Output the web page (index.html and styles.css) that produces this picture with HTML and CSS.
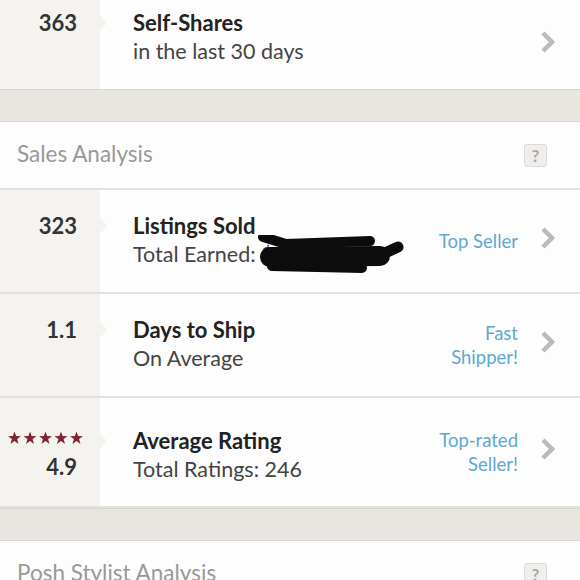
FILE: index.html
```html
<!DOCTYPE html>
<html lang="en">
<head>
  <meta charset="UTF-8" />
  <title>Closet Stats</title>
  <link rel="stylesheet" href="styles.css">
</head>
<body>

<div class="row row-top">
  <div class="stat"><div class="stat-num">363</div></div>
  <div class="info">
    <div class="title">Self-Shares</div>
    <div class="sub">in the last 30 days</div>
  </div>
  <div class="tail">
    <svg class="chev" width="14" height="22" viewBox="0 0 14 22"><path d="M2 2 L11 11 L2 20" /></svg>
  </div>
</div>

<div class="band"></div>

<div class="section-head">
  <span>Sales Analysis</span>
  <span class="help">?</span>
</div>

<div class="row">
  <div class="stat"><div class="stat-num">323</div></div>
  <div class="info">
    <div class="title">Listings Sold</div>
    <div class="sub">Total Earned: $</div>
  </div>
  <div class="tail">
    <div class="badge">Top Seller</div>
    <svg class="chev" width="14" height="22" viewBox="0 0 14 22"><path d="M2 2 L11 11 L2 20" /></svg>
  </div>
  <!-- scribbled out by hand in the screenshot -->
  <svg class="scribble" width="150" height="40" viewBox="0 0 150 40">
    <path d="M5 2 L28 9 L112 6" stroke-width="10" />
    <path d="M12 22 L122 21" stroke-width="20" />
    <path d="M112 25 L140 12" stroke-width="11" />
    <path d="M14 31 L104 33" stroke-width="10" />
  </svg>
</div>

<div class="row">
  <div class="stat"><div class="stat-num">1.1</div></div>
  <div class="info">
    <div class="title">Days to Ship</div>
    <div class="sub">On Average</div>
  </div>
  <div class="tail">
    <div class="badge">Fast<br>Shipper!</div>
    <svg class="chev" width="14" height="22" viewBox="0 0 14 22"><path d="M2 2 L11 11 L2 20" /></svg>
  </div>
</div>

<div class="row row-rating">
  <div class="stat">
    <svg class="stars" width="76" height="14" viewBox="0 0 76 14">
      <defs>
        <polygon id="star" points="6.5,0 8.1,4.6 13,4.7 9.1,7.6 10.5,12.4 6.5,9.5 2.5,12.4 3.9,7.6 0,4.7 4.9,4.6" />
      </defs>
      <use href="#star" x="0" y="0.5" />
      <use href="#star" x="15.5" y="0.5" />
      <use href="#star" x="31" y="0.5" />
      <use href="#star" x="46.5" y="0.5" />
      <use href="#star" x="62" y="0.5" />
    </svg>
    <div class="stat-num">4.9</div>
  </div>
  <div class="info">
    <div class="title">Average Rating</div>
    <div class="sub">Total Ratings: 246</div>
  </div>
  <div class="tail">
    <div class="badge">Top-rated<br>Seller!</div>
    <svg class="chev" width="14" height="22" viewBox="0 0 14 22"><path d="M2 2 L11 11 L2 20" /></svg>
  </div>
</div>

<div class="band"></div>

<div class="section-head">
  <span>Posh Stylist Analysis</span>
  <span class="help">?</span>
</div>

</body>
</html>
```

FILE: styles.css
```css
body { margin: 0; background: #fdfdfd; font-family: 'Lato', 'Open Sans', sans-serif; color: #222; overflow: hidden; }

.row { position: relative; display: flex; background: #fdfdfd; border-bottom: 2px solid #e3e1de; }
.row-top { border-bottom: none; }
.stat { width: 100px; box-sizing: border-box; padding: 22px 23px 0 0; background: #f4f3f0; text-align: right; }
.stat-num { font-size: 22px; line-height: 28px; font-weight: 700; color: #333; }
.stars { display: block; margin: 8px 0 8px 8px; fill: #7e2634; }
.info { flex: 1; padding: 22px 0 24px 33px; }
.title { position: relative; font-size: 22px; line-height: 28px; font-weight: 700; color: #222; }
.title::before { content: ""; position: absolute; left: -33px; top: 6px; border-left: 7px solid #f4f3f0; border-top: 8px solid transparent; border-bottom: 8px solid transparent; }
.sub { font-size: 21.5px; line-height: 28px; color: #444; }
.tail { display: flex; align-items: center; padding-right: 25px; }
.badge { font-size: 18.5px; line-height: 24px; color: #5ea8d0; text-align: right; }
.chev { margin-left: 23px; margin-bottom: 6px; }
.chev path { fill: none; stroke: #bababa; stroke-width: 4.5; }

.row-top .stat { padding-top: 9px; }
.row-top .info { padding-top: 9px; }
.row-rating .stat { padding-top: 25px; }
.row-rating .info { padding-top: 29px; padding-bottom: 23px; }

.scribble { position: absolute; left: 258px; top: 45px; }
.scribble path { fill: none; stroke: #0c0c0c; stroke-linecap: round; stroke-linejoin: round; }

.band { height: 31px; background: #e9e6e1; border-top: 1px solid #d9d6d1; border-bottom: 1px solid #d9d6d1; }

.section-head { display: flex; align-items: center; justify-content: space-between; height: 66px; padding: 0 33px 0 17px; background: #fdfdfd; border-bottom: 2px solid #e3e1de; font-size: 22.5px; color: #999; }
.section-head span:first-child { margin-bottom: 3px; }
.help { width: 21px; height: 21px; border: 1px solid #dcdad7; border-radius: 3px; background: #f0eeeb; font-size: 17px; font-weight: 700; line-height: 21px; text-align: center; color: #a8a8a8; }
```
